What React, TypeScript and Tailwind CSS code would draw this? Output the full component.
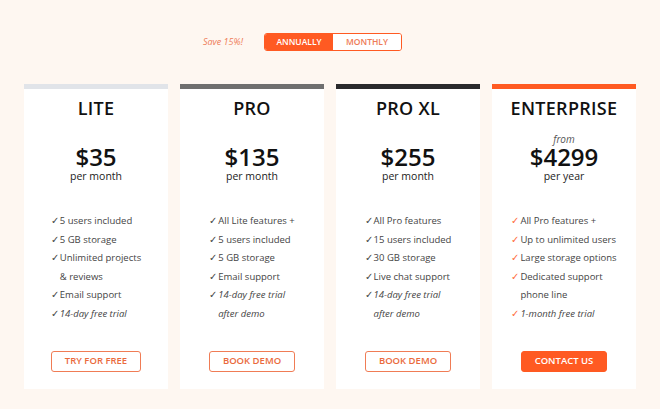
import React from 'react'

type Plan = {
  name: string
  barColor: string
  from?: boolean
  price: string
  period: string
  features: { text: string; italic?: boolean; cont?: string }[]
  cta: string
  solid?: boolean
  orangeCheck?: boolean
}

const plans: Plan[] = [
  {
    name: 'LITE',
    barColor: 'bg-[#e1e4e9]',
    price: '$35',
    period: 'per month',
    features: [
      { text: '5 users included' },
      { text: '5 GB storage' },
      { text: 'Unlimited projects', cont: '& reviews' },
      { text: 'Email support' },
      { text: '14-day free trial', italic: true },
    ],
    cta: 'TRY FOR FREE',
  },
  {
    name: 'PRO',
    barColor: 'bg-[#6f6f6f]',
    price: '$135',
    period: 'per month',
    features: [
      { text: 'All Lite features +' },
      { text: '5 users included' },
      { text: '5 GB storage' },
      { text: 'Email support' },
      { text: '14-day free trial', italic: true, cont: 'after demo' },
    ],
    cta: 'BOOK DEMO',
  },
  {
    name: 'PRO XL',
    barColor: 'bg-[#2a2a2c]',
    price: '$255',
    period: 'per month',
    features: [
      { text: 'All Pro features' },
      { text: '15 users included' },
      { text: '30 GB storage' },
      { text: 'Live chat support' },
      { text: '14-day free trial', italic: true, cont: 'after demo' },
    ],
    cta: 'BOOK DEMO',
  },
  {
    name: 'ENTERPRISE',
    barColor: 'bg-[#ff5a22]',
    from: true,
    price: '$4299',
    period: 'per year',
    features: [
      { text: 'All Pro features +' },
      { text: 'Up to unlimited users' },
      { text: 'Large storage options' },
      { text: 'Dedicated support', cont: 'phone line' },
      { text: '1-month free trial', italic: true },
    ],
    cta: 'CONTACT US',
    solid: true,
    orangeCheck: true,
  },
]

function PlanCard({ plan }: { plan: Plan }) {
  return (
    <div className="flex h-[305px] w-[144px] flex-col bg-white">
      <div className={`h-[5px] w-full ${plan.barColor}`} />
      <div className="mt-[8px] text-center text-[18px] leading-[22px] font-semibold tracking-[0.3px] text-[#111]">
        {plan.name}
      </div>

      {/* price */}
      <div className="mt-[14px] flex flex-col items-center">
        <div className="h-[12px] text-[10px] leading-[12px] italic text-[#555]">
          {plan.from ? 'from' : ''}
        </div>
        <div className="text-[24px] leading-[24px] font-semibold text-[#111]">{plan.price}</div>
        <div className="mt-[1px] text-[10.5px] leading-[12px] text-[#222]">{plan.period}</div>
      </div>

      {/* features */}
      <div className="mt-[30px] flex justify-center">
        <ul className="text-[9.5px] leading-[18.5px] text-[#444]">
          {plan.features.map((f, i) => (
            <li key={i} className="flex">
              <span className={`w-[9px] shrink-0 ${plan.orangeCheck ? 'text-[#ff6a3a]' : 'text-[#444]'}`}>✓</span>
              <span className={f.italic ? 'italic' : ''}>
                {f.text}
                {f.cont && (
                  <>
                    <br />
                    {f.cont}
                  </>
                )}
              </span>
            </li>
          ))}
        </ul>
      </div>

      <div className="mt-auto mb-[17px] flex justify-center">
        <button
          className={
            plan.solid
              ? 'h-[21px] rounded-[3px] border border-[#ff5a22] bg-[#ff5a22] px-[13px] text-[9.5px] font-semibold text-white'
              : 'h-[21px] rounded-[3px] border-[1.5px] border-[#f07c55] bg-white px-[13px] text-[9.5px] font-semibold text-[#ea6a3c]'
          }
        >
          {plan.cta}
        </button>
      </div>
    </div>
  )
}

export default function App() {
  return (
    <div
      className="h-[409px] w-[660px] overflow-hidden bg-[#fef7f1]"
      style={{ fontFamily: '"Open Sans", "Liberation Sans", sans-serif' }}
    >
      {/* Billing toggle */}
      <div className="flex items-center pt-[33px] pl-[203px]">
        <span className="text-[9px] italic text-[#ee7b57]">Save 15%!</span>
        <div className="ml-[21px] flex h-[18px] w-[138px] overflow-hidden rounded-[3px] border-[1.5px] border-[#ff5a22]">
          <div className="flex w-1/2 items-center justify-center bg-[#ff5a22] text-[8.5px] font-semibold text-white">
            ANNUALLY
          </div>
          <div className="flex w-1/2 items-center justify-center bg-white text-[8.5px] font-semibold text-[#ee7b57]">
            MONTHLY
          </div>
        </div>
      </div>

      {/* Plans */}
      <div className="mt-[33px] flex gap-[12px] pl-[24px]">
        {plans.map((p) => (
          <PlanCard key={p.name} plan={p} />
        ))}
      </div>
    </div>
  )
}
